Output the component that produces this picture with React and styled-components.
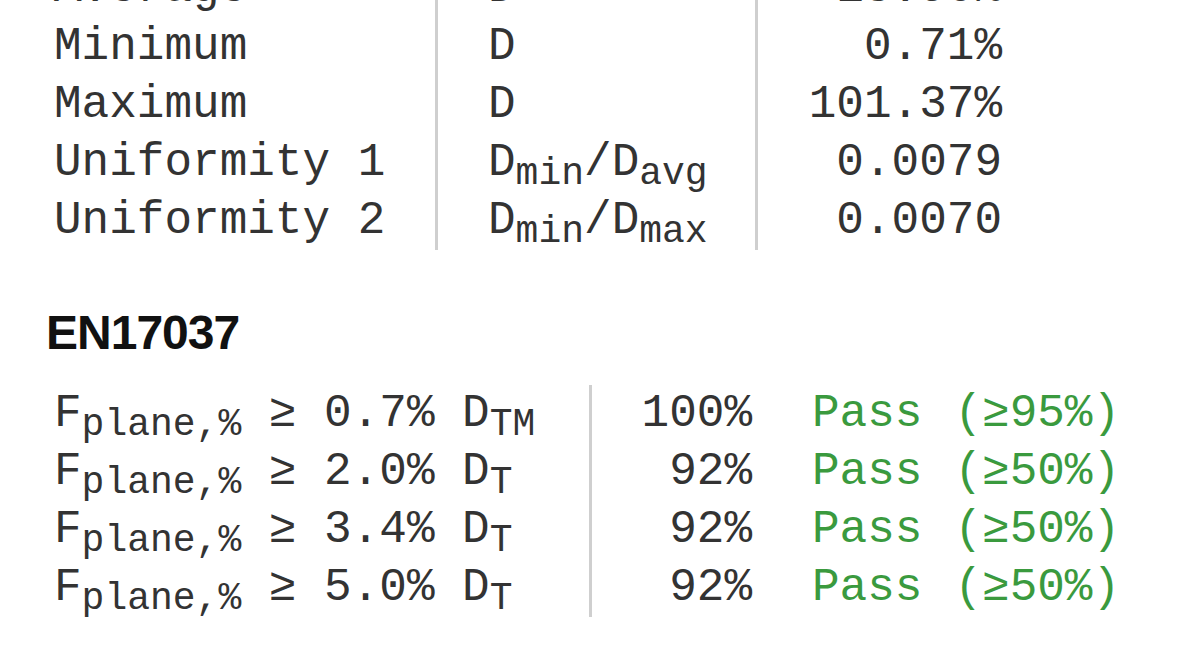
import React from 'react'
import styled, { createGlobalStyle } from 'styled-components'

const palette = {
  text: '#333333',
  heading: '#111111',
  rule: '#cfcfcf',
  pass: '#3a9a3e'
}

const GlobalStyle = createGlobalStyle`
  html, body {
    margin: 0;
    padding: 0;
    background: #ffffff;
    overflow: hidden;
  }
`

const Page = styled.div`
  margin-top: -40px;
  padding-left: 54px;
  font-family: "Liberation Mono", "Courier New", monospace;
  font-size: 46px;
  line-height: 58px;
  color: ${palette.text};
`

const StatsTable = styled.div`
  display: grid;
  grid-template-columns: ${props => props.columns};
`

const Cell = styled.div`
  white-space: pre;
  padding-left: ${props => props.indent || 0}px;
  text-align: ${props => (props.right ? 'right' : 'left')};
  border-right: ${props => (props.ruled ? `3px solid ${palette.rule}` : 'none')};
  color: ${props => (props.pass ? palette.pass : 'inherit')};
`

const Sub = styled.span`
  font-size: 38px;
  line-height: 0;
  vertical-align: -9px;
`

const Heading = styled.h2`
  margin: 55px 0 24px -8px;
  font-family: "Liberation Sans", Arial, sans-serif;
  font-weight: bold;
  font-size: 48px;
  line-height: 56px;
  letter-spacing: -1px;
  color: ${palette.heading};
`

const PassText = styled.span`
  margin-right: 32px;
`

const stats = [
  { label: 'Average', metric: <>D</>, value: '13.90%' },
  { label: 'Minimum', metric: <>D</>, value: '0.71%' },
  { label: 'Maximum', metric: <>D</>, value: '101.37%' },
  {
    label: 'Uniformity 1',
    metric: <>D<Sub>min</Sub>/D<Sub>avg</Sub></>,
    value: '0.0079'
  },
  {
    label: 'Uniformity 2',
    metric: <>D<Sub>min</Sub>/D<Sub>max</Sub></>,
    value: '0.0070'
  }
]

const checks = [
  { level: '0.7', target: 'TM', share: '100%', req: '95' },
  { level: '2.0', target: 'T', share: '92%', req: '50' },
  { level: '3.4', target: 'T', share: '92%', req: '50' },
  { level: '5.0', target: 'T', share: '92%', req: '50' }
]

function App() {
  return (
    <Page>
      <GlobalStyle />
      <StatsTable columns='384px 320px 244px'>
        {stats.map(row => (
          <React.Fragment key={row.label}>
            <Cell ruled>{row.label}</Cell>
            <Cell ruled indent={50}>{row.metric}</Cell>
            <Cell right>{row.value}</Cell>
          </React.Fragment>
        ))}
      </StatsTable>

      <Heading>EN17037</Heading>

      <StatsTable columns='538px 160px 400px'>
        {checks.map((row, i) => (
          <React.Fragment key={i}>
            <Cell ruled>
              F<Sub>plane,%</Sub>{` ≥ ${row.level}% D`}<Sub>{row.target}</Sub>
            </Cell>
            <Cell right>{row.share}</Cell>
            <Cell pass indent={60}>
              <PassText>Pass</PassText>({`≥${row.req}%`})
            </Cell>
          </React.Fragment>
        ))}
      </StatsTable>
    </Page>
  )
}

export default App
